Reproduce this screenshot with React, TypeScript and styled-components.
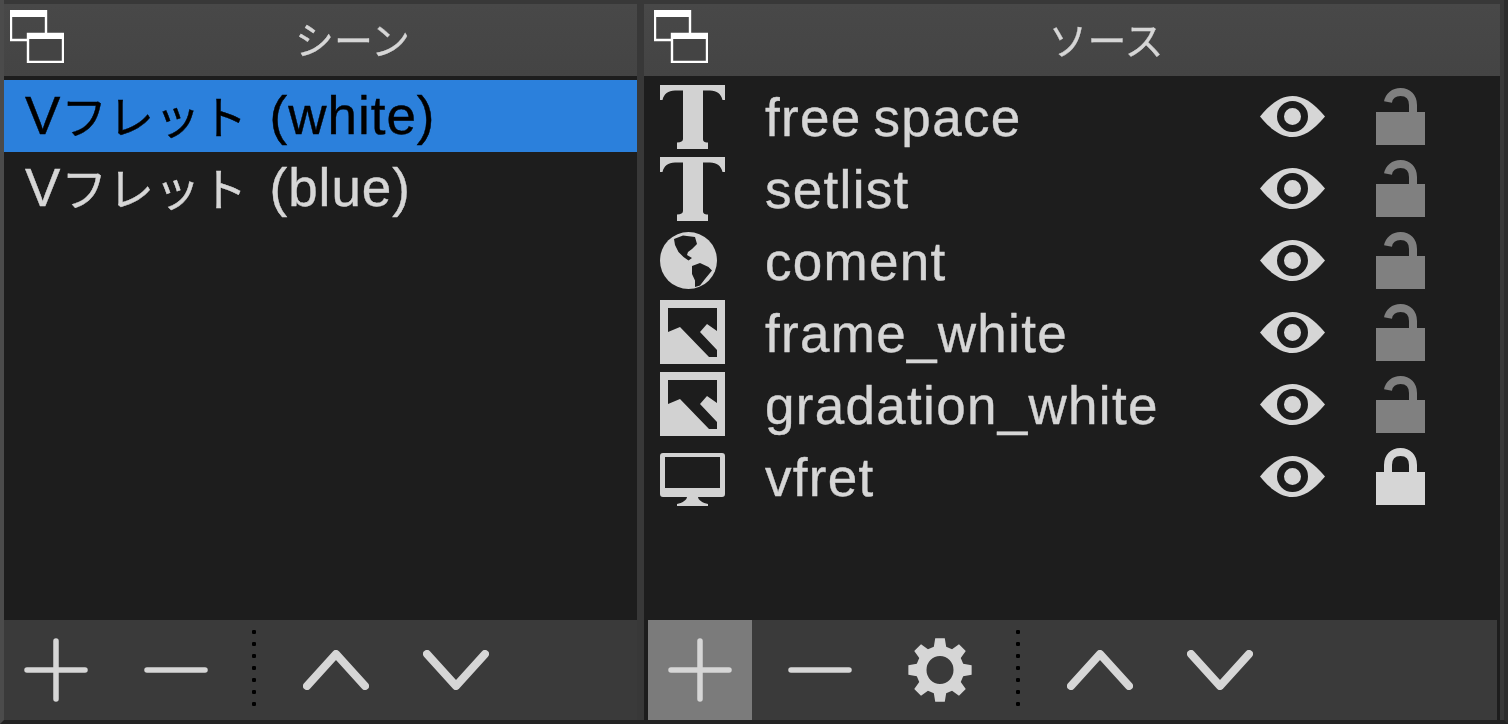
import React from "react";
import styled, { createGlobalStyle } from "styled-components";

const Global = createGlobalStyle`
  html, body { margin: 0; padding: 0; background: #222222; overflow: hidden; }
  * { box-sizing: border-box; }
`;

const Window = styled.div`
  width: 1508px;
  height: 724px;
  overflow: hidden;
  display: flex;
  gap: 7px;
  padding-top: 4px;
  border-left: 4px solid #4b4b4b;
  border-right: 4px solid #2c2c2c;
  border-bottom: 4px solid #232323;
  background: #383838;
  font-family: "Liberation Sans", "Noto Sans CJK JP", sans-serif;
  color: #d6d6d6;
  filter: blur(0.5px);
`;

const Panel = styled.section<{ $width: number }>`
  width: ${(p) => p.$width}px;
  height: 716px;
  flex: none;
  display: flex;
  flex-direction: column;
  background: #1d1d1d;
`;

const Header = styled.header<{ $inset?: boolean }>`
  height: 72px;
  flex: none;
  display: flex;
  align-items: center;
  padding-left: ${(p) => (p.$inset ? "10px" : "6px")};
  gap: 4px;
  background: linear-gradient(#484848, #444444);
`;

const Title = styled.h2`
  flex: 1;
  margin: 0;
  padding-bottom: 4px;
  text-align: center;
  font-family: "Noto Sans CJK JP", sans-serif;
  font-size: 39px;
  line-height: 68px;
  font-weight: 400;
  color: #d6d6d6;
  -webkit-text-stroke: 0.3px #d6d6d6;
`;

const List = styled.ul`
  list-style: none;
  flex: 1;
  margin: 4px 0 0;
  padding: 0;
`;

const SceneRow = styled.li<{ $selected?: boolean }>`
  height: 72px;
  padding-left: 21px;
  font-size: 53px;
  letter-spacing: 1px;
  word-spacing: 6px;
  line-height: 72px;
  white-space: nowrap;
  overflow: hidden;
  -webkit-text-stroke: 0.4px currentColor;
  color: ${(p) => (p.$selected ? "#000" : "#d6d6d6")};
  background: ${(p) => (p.$selected ? "#2b80dc" : "transparent")};
`;

const Kana = styled.span`
  font-size: 46px;
  letter-spacing: 0.6px;
`;

const SourceRow = styled.li`
  height: 72px;
  display: grid;
  grid-template-columns: 65px 1fr 65px 100px;
  align-items: center;
  padding-left: 16px;
  padding-right: 75px;
`;

const SourceName = styled.span`
  font-size: 53px;
  letter-spacing: 1.3px;
  word-spacing: -4px;
  line-height: 68px;
  padding: 4px 0 0 40px;
  white-space: nowrap;
  -webkit-text-stroke: 0.4px currentColor;
`;

const IconCell = styled.span`
  display: flex;
  align-items: center;
  justify-content: flex-start;
`;

const LockCell = styled(IconCell)`
  margin-left: 51px;
`;

const Toolbar = styled.footer<{ $inset?: boolean }>`
  height: 100px;
  flex: none;
  display: flex;
  align-items: center;
  gap: 16px;
  margin: 0 ${(p) => (p.$inset ? "3px" : "0")} 0 ${(p) => (p.$inset ? "4px" : "0")};
  background: #3a3a3a;
`;

const ToolButton = styled.button<{ $active?: boolean }>`
  width: 104px;
  height: 100px;
  flex: none;
  padding: 0;
  border: 0;
  display: flex;
  align-items: center;
  justify-content: center;
  background: ${(p) => (p.$active ? "#7b7b7b" : "transparent")};
`;

const Divider = styled.div`
  width: 4px;
  height: 88px;
  flex: none;
  margin: 0 12px 0 8px;
  background-image: radial-gradient(circle, #000 0 2px, transparent 2.4px);
  background-size: 4px 12px;
  background-repeat: repeat-y;
`;

const WindowsIcon = () => (
  <svg width="54" height="53" viewBox="0 0 54 53" fill="none" style={{ flex: "none", marginTop: -7 }}>
    <path d="M1 1H36V30H1Z" stroke="#fff" strokeWidth="2.4" />
    <rect x="0" y="0" width="37" height="7" fill="#fff" />
    <path d="M18 24H53V52H18Z" fill="#444" stroke="#fff" strokeWidth="2.4" />
    <rect x="17" y="23" width="37" height="6" fill="#fff" />
  </svg>
);

const TextIcon = () => (
  <svg width="65" height="64" viewBox="0 0 65 64" fill="#d2d2d2" style={{ marginTop: 2 }}>
    <path d="M0 0H65V15H62.5C61 9 57 5.5 50 5.5H43V54C43 56 44 57.5 48 57.5V64H17V57.5C21 57.5 23 56 23 54V5.5H15C8 5.5 4 9 2.5 15H0Z" />
  </svg>
);

const GlobeIcon = () => (
  <svg width="57" height="57" viewBox="0 0 57 57">
    <circle cx="28.5" cy="28.5" r="28.5" fill="#d2d2d2" />
    <path
      fill="#1d1d1d"
      d="M14 7L23 3.5L35 5L37 12L32 17L28 20L27 23L32 26L28.5 28.5L23.5 25L18.5 20L15 13ZM32 34L40 31L48.5 35L52 38.5L45 47L40 53.5L35 55L35 48.5L32 42Z"
    />
  </svg>
);

const ImageIcon = () => (
  <svg width="65" height="64" viewBox="0 0 65 64">
    <rect width="65" height="64" fill="#d2d2d2" />
    <path fill="#1d1d1d" d="M8 8H57V31L47 24L40 32L57 50V57H49L20 27L8 32Z" />
  </svg>
);

const MonitorIcon = () => (
  <svg width="65" height="53" viewBox="0 0 65 53" style={{ marginTop: 6 }}>
    <path
      fill="#d2d2d2"
      fillRule="evenodd"
      d="M3 0H62A3 3 0 0 1 65 3V41A3 3 0 0 1 62 44H38C38 47 43 50 48 51V53H17V51C22 50 27 47 27 44H3A3 3 0 0 1 0 41V3A3 3 0 0 1 3 0ZM5 4V35H60V4Z"
    />
  </svg>
);

const EyeIcon = () => (
  <svg width="65" height="41" viewBox="0 0 65 41">
    <path
      fill="#d6d6d6"
      d="M0 20.5C12 6 22 0 32.5 0C43 0 53 6 65 20.5C53 35 43 41 32.5 41C22 41 12 35 0 20.5Z"
    />
    <circle cx="32.5" cy="20.5" r="12" fill="none" stroke="#1d1d1d" strokeWidth="7" />
  </svg>
);

const LockIcon = ({ open }: { open: boolean }) => {
  const colour = open ? "#808080" : "#d6d6d6";
  return (
    <svg width="49" height="57" viewBox="0 0 49 57" fill="none">
      <path
        stroke={colour}
        strokeWidth="8"
        d={open ? "M12 14C13 8 18 4 24.5 4C32 4 37 9 37 17V24" : "M12 24V17C12 9 17 4 24.5 4C32 4 37 9 37 17V24"}
      />
      <rect x="0" y="24" width="49" height="33" fill={colour} />
    </svg>
  );
};

const PlusIcon = () => (
  <svg width="64" height="64" viewBox="0 0 64 64" stroke="#d6d6d6" strokeWidth="5.5" strokeLinecap="round">
    <path d="M32 3V61M3 32H61" />
  </svg>
);

const MinusIcon = () => (
  <svg width="64" height="64" viewBox="0 0 64 64" stroke="#d6d6d6" strokeWidth="5.5" strokeLinecap="round">
    <path d="M3 32H61" />
  </svg>
);

const ChevronIcon = ({ up }: { up: boolean }) => (
  <svg width="66" height="40" viewBox="0 0 66 40" fill="none" stroke="#d6d6d6" strokeWidth="8" strokeLinecap="round" strokeLinejoin="round">
    <path d={up ? "M4 36L33 4L62 36" : "M4 4L33 36L62 4"} />
  </svg>
);

const gearPath = (() => {
  const c = 32;
  let d = "";
  for (let i = 0; i < 8; i++) {
    const a = (i * Math.PI) / 4 - Math.PI / 2;
    const pt = (r: number, o: number) =>
      `${(c + r * Math.cos(a + o)).toFixed(2)} ${(c + r * Math.sin(a + o)).toFixed(2)}`;
    d += `${i === 0 ? "M" : "L"}${pt(24, -0.26)}L${pt(32, -0.15)}L${pt(32, 0.15)}L${pt(24, 0.26)}`;
  }
  return `${d}ZM${c - 13.5} ${c}A13.5 14 0 1 0 ${c + 13.5} ${c}A13.5 14 0 1 0 ${c - 13.5} ${c}Z`;
})();

const GearIcon = () => (
  <svg width="64" height="64" viewBox="0 0 64 64">
    <path fill="#d6d6d6" fillRule="evenodd" d={gearPath} />
  </svg>
);

const sources: { name: string; icon: React.ReactNode; locked?: boolean }[] = [
  { name: "free space", icon: <TextIcon /> },
  { name: "setlist", icon: <TextIcon /> },
  { name: "coment", icon: <GlobeIcon /> },
  { name: "frame_white", icon: <ImageIcon /> },
  { name: "gradation_white", icon: <ImageIcon /> },
  { name: "vfret", icon: <MonitorIcon />, locked: true },
];

export default function App() {
  return (
    <>
      <Global />
      <Window>
        <Panel $width={633}>
          <Header>
            <WindowsIcon />
            <Title>シーン</Title>
          </Header>
          <List>
            <SceneRow $selected>V<Kana>フレット</Kana> (white)</SceneRow>
            <SceneRow>V<Kana>フレット</Kana> (blue)</SceneRow>
          </List>
          <Toolbar>
            <ToolButton><PlusIcon /></ToolButton>
            <ToolButton><MinusIcon /></ToolButton>
            <Divider />
            <ToolButton><ChevronIcon up /></ToolButton>
            <ToolButton><ChevronIcon up={false} /></ToolButton>
          </Toolbar>
        </Panel>
        <Panel $width={856}>
          <Header $inset>
            <WindowsIcon />
            <Title>ソース</Title>
          </Header>
          <List>
            {sources.map((s) => (
              <SourceRow key={s.name}>
                <IconCell>{s.icon}</IconCell>
                <SourceName>{s.name}</SourceName>
                <IconCell><EyeIcon /></IconCell>
                <LockCell><LockIcon open={!s.locked} /></LockCell>
              </SourceRow>
            ))}
          </List>
          <Toolbar $inset>
            <ToolButton $active><PlusIcon /></ToolButton>
            <ToolButton><MinusIcon /></ToolButton>
            <ToolButton><GearIcon /></ToolButton>
            <Divider />
            <ToolButton><ChevronIcon up /></ToolButton>
            <ToolButton><ChevronIcon up={false} /></ToolButton>
          </Toolbar>
        </Panel>
      </Window>
    </>
  );
}
